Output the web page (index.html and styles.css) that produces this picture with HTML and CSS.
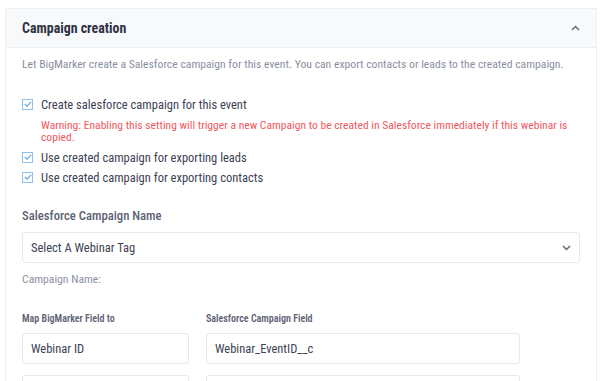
FILE: index.html
```html
<!DOCTYPE html>
<html>
<head>
<meta charset="utf-8">
<link rel="stylesheet" href="styles.css">
</head>
<body>
<div class="card">
  <div class="card-header">
    <span class="title">Campaign creation</span>
    <svg class="chev" width="9" height="6" viewBox="0 0 9 6"><path d="M1 5 L4.5 1.5 L8 5" fill="none" stroke="#6b7083" stroke-width="1.5"/></svg>
  </div>
  <div class="card-body">
    <p class="desc">Let BigMarker create a Salesforce campaign for this event. You can export contacts or leads to the created campaign.</p>
    <div class="checks">
      <div class="check-row">
        <span class="box"><svg width="8" height="6" viewBox="0 0 8 6"><path d="M0.8 3 L3 5.2 L7.2 0.8" fill="none" stroke="#5aa5e6" stroke-width="1.1"/></svg></span>
        <span class="label">Create salesforce campaign for this event</span>
      </div>
      <p class="warn">Warning: Enabling this setting will trigger a new Campaign to be created in Salesforce immediately if this webinar is copied.</p>
      <div class="check-row">
        <span class="box"><svg width="8" height="6" viewBox="0 0 8 6"><path d="M0.8 3 L3 5.2 L7.2 0.8" fill="none" stroke="#5aa5e6" stroke-width="1.1"/></svg></span>
        <span class="label">Use created campaign for exporting leads</span>
      </div>
      <div class="check-row">
        <span class="box"><svg width="8" height="6" viewBox="0 0 8 6"><path d="M0.8 3 L3 5.2 L7.2 0.8" fill="none" stroke="#5aa5e6" stroke-width="1.1"/></svg></span>
        <span class="label">Use created campaign for exporting contacts</span>
      </div>
    </div>
    <div class="section-label">Salesforce Campaign Name</div>
    <div class="select">
      <span>Select A Webinar Tag</span>
      <svg width="9" height="6" viewBox="0 0 9 6"><path d="M1 1 L4.5 4.5 L8 1" fill="none" stroke="#5f6578" stroke-width="1.5"/></svg>
    </div>
    <div class="campaign-name">Campaign Name:</div>
    <div class="map-grid">
      <div class="col-label">Map BigMarker Field to</div>
      <div class="col-label">Salesforce Campaign Field</div>
      <div class="field">Webinar ID</div>
      <div class="field">Webinar_EventID__c</div>
      <div class="field"></div>
      <div class="field"></div>
    </div>
  </div>
</div>
</body>
</html>
```
FILE: styles.css
```css
* { box-sizing: border-box; }
html, body { margin: 0; padding: 0; background: #fff; }
body {
  font-family: "Roboto Condensed", "Roboto", sans-serif;
  padding: 8px 3px 0 5px;
  overflow: hidden;
  height: 381px;
}
.card {
  border: 1px solid #eceef1;
  border-bottom: none;
  width: 592px;
}
.card-header {
  background: #f8f9fb;
  height: 39px;
  border-bottom: 1px solid #eceef1;
  display: flex;
  align-items: center;
  justify-content: space-between;
  padding: 0 16px 0 16px;
}
.title {
  font-weight: 700;
  font-size: 13.9px;
  color: #2e3243;
}
.chev { margin-top: -1px; }
.card-body {
  padding: 8px 16px 0 16px;
}
.desc {
  margin: 0;
  font-size: 11.7px;
  line-height: 16px;
  color: #8a8fa0;
  white-space: nowrap;
}
.checks { margin-top: 22px; }
.check-row {
  display: flex;
  align-items: center;
  height: 20px;
}
.box {
  width: 11px;
  height: 11px;
  border: 1px solid #8fc1ec;
  display: flex;
  align-items: center;
  justify-content: center;
  margin-right: 8px;
}
.label {
  font-size: 12.5px;
  color: #3d4254;
}
.warn {
  margin: 5px 0 4px 19px;
  font-size: 11.6px;
  line-height: 12px;
  color: #ef5860;
  max-width: 533px;
}
.section-label {
  margin-top: 21px;
  font-size: 12.7px;
  font-weight: 500;
  color: #5d6275;
  line-height: 16px;
}
.select {
  margin-top: 8px;
  width: 558px;
  height: 31px;
  border: 1px solid #e6e8ec;
  border-radius: 3px;
  display: flex;
  align-items: center;
  justify-content: space-between;
  padding: 0 8px 0 8px;
  font-size: 12.5px;
  color: #3d4254;
}
.campaign-name {
  margin-top: 8px;
  font-size: 11.7px;
  color: #8a8fa0;
  line-height: 16px;
}
.map-grid {
  margin-top: 26px;
  display: grid;
  grid-template-columns: 167px 314px;
  column-gap: 17px;
  row-gap: 11px;
}
.col-label {
  font-size: 10px;
  font-weight: 600;
  color: #5d6275;
  line-height: 12px;
  margin-bottom: -3px;
}
.field {
  height: 31px;
  border: 1px solid #e6e8ec;
  border-radius: 3px;
  display: flex;
  align-items: center;
  padding: 0 8px;
  font-size: 12.5px;
  color: #3d4254;
}
```
